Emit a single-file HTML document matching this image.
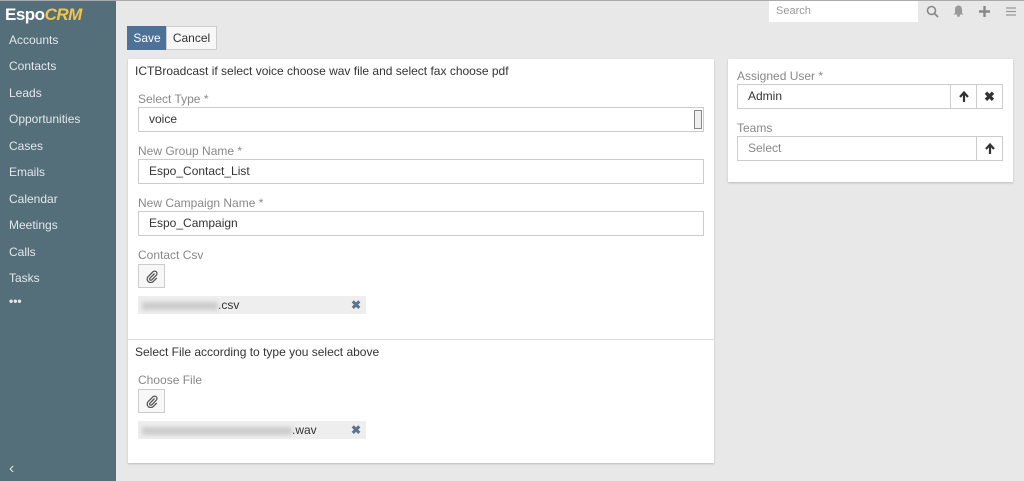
<!DOCTYPE html>
<html><head><meta charset="utf-8"><style>
*{box-sizing:border-box;margin:0;padding:0}
body{width:1024px;height:481px;overflow:hidden;background:#e8e8e8;font-family:"Liberation Sans",sans-serif;font-size:12px;color:#333;position:relative}
.top{position:absolute;left:0;top:0;width:1024px;height:1px;background:#aaa;z-index:5}
.sb{position:absolute;left:0;top:0;width:116px;height:481px;background:#546e7a}
.sb .nav{position:absolute;left:9px;color:#e3e8ec;font-size:12px}
.logo{position:absolute;left:5px;top:5px;font-size:17px;font-weight:bold;color:#fff;letter-spacing:-0.5px}
.logo span{color:#f4c44a;font-style:italic}
.abs{position:absolute}
.btn{position:absolute;height:24px;line-height:22px;font-size:12px;text-align:center;border:1px solid #ccc}
.panel{position:absolute;background:#fff;box-shadow:0 1px 2px rgba(0,0,0,.2)}
.lbl{position:absolute;color:#888;font-size:12px}
.inp{position:absolute;border:1px solid #ccc;height:25px;line-height:23px;padding-left:10px;font-size:12px;background:#fff}
.clip{position:absolute;width:27px;height:24px;border:1px solid #ccc;background:#f7f7f7}
.clip svg{position:absolute;left:7px;top:5px}
.file{position:absolute;height:18px;background:#eee;line-height:18px;font-size:12px}
.blur{display:inline-block;height:8px;background:#ccc;filter:blur(2px);vertical-align:middle}
.x{position:absolute;right:5px;top:0;color:#5a7390;font-weight:bold;font-size:12px}
.ib{position:absolute;width:27px;height:25px;border:1px solid #ccc;text-align:center;line-height:23px;font-weight:bold;font-size:13px;background:#fff}
.ib svg{position:absolute;left:8px;top:6px}
</style></head><body>
<div class="top"></div>
<div class="sb">
<div class="logo">Espo<span>CRM</span></div>
<div class="nav" style="top:33px">Accounts</div>
<div class="nav" style="top:59px">Contacts</div>
<div class="nav" style="top:86px">Leads</div>
<div class="nav" style="top:112px">Opportunities</div>
<div class="nav" style="top:139px">Cases</div>
<div class="nav" style="top:165px">Emails</div>
<div class="nav" style="top:192px">Calendar</div>
<div class="nav" style="top:218px">Meetings</div>
<div class="nav" style="top:245px">Calls</div>
<div class="nav" style="top:271px">Tasks</div>
<div class="nav" style="top:294px;font-weight:bold">•••</div>
<div class="nav" style="top:460px;font-size:16px;color:#ddd">‹</div>
</div>
<div class="abs" style="left:769px;top:1px;width:149px;height:21px;background:#fff;color:#999;font-size:11px;line-height:21px;padding-left:7px">Search</div>
<svg class="abs" style="left:926px;top:5px" width="13" height="13"><circle cx="5.5" cy="5.5" r="4" stroke="#888" stroke-width="1.6" fill="none"/><line x1="8.5" y1="8.5" x2="12" y2="12" stroke="#888" stroke-width="1.8"/></svg>
<svg class="abs" style="left:953px;top:5px" width="11" height="12"><path d="M5.5 0.5C3 0.5 2 2.5 2 5v3L0.5 9.5h10L9 8V5C9 2.5 8 0.5 5.5 0.5z" fill="#999"/><circle cx="5.5" cy="10.5" r="1.4" fill="#999"/></svg>
<svg class="abs" style="left:979px;top:6px" width="11" height="11"><path d="M5.5 0v11M0 5.5h11" stroke="#888" stroke-width="2.4"/></svg>
<svg class="abs" style="left:1006px;top:7px" width="10" height="9"><path d="M0 1h10M0 4.5h10M0 8h10" stroke="#999" stroke-width="1.3"/></svg>
<div class="btn" style="left:127px;top:26px;width:40px;background:#4e7199;border-color:#4e7199;color:#fff">Save</div>
<div class="btn" style="left:166px;top:26px;width:51px;background:#f7f7f7;color:#333">Cancel</div>
<div class="panel" style="left:128px;top:59px;width:586px;height:404px">
<div class="abs" style="left:7px;top:5px;font-size:12px">ICTBroadcast if select voice choose wav file and select fax choose pdf</div>
<div class="lbl" style="left:10px;top:33px">Select Type *</div>
<div class="inp" style="left:10px;top:48px;width:566px">voice<span style="position:absolute;right:1px;top:2px;width:8px;height:19px;border:1px solid #888;background:#eee"></span></div>
<div class="lbl" style="left:10px;top:85px">New Group Name *</div>
<div class="inp" style="left:10px;top:100px;width:566px">Espo_Contact_List</div>
<div class="lbl" style="left:10px;top:137px">New Campaign Name *</div>
<div class="inp" style="left:10px;top:152px;width:566px">Espo_Campaign</div>
<div class="lbl" style="left:10px;top:189px">Contact Csv</div>
<div class="clip" style="left:10px;top:205px"><svg width="12" height="13" viewBox="0 0 12 13"><path d="M8.5 3.5L4 8.2a1.2 1.2 0 0 0 1.7 1.7L10.3 5.2a2.4 2.4 0 0 0-3.4-3.4L2.2 6.6a3.5 3.5 0 0 0 5 5L10.7 8" stroke="#555" stroke-width="1.3" fill="none"/></svg></div>
<div class="file" style="left:10px;top:237px;width:228px;padding-left:4px"><span class="blur" style="width:76px"></span>.csv<span class="x">✖</span></div>
<div class="abs" style="left:0;top:280px;width:586px;border-top:1px solid #ddd"></div>
<div class="abs" style="left:7px;top:286px">Select File according to type you select above</div>
<div class="lbl" style="left:10px;top:314px">Choose File</div>
<div class="clip" style="left:10px;top:330px"><svg width="12" height="13" viewBox="0 0 12 13"><path d="M8.5 3.5L4 8.2a1.2 1.2 0 0 0 1.7 1.7L10.3 5.2a2.4 2.4 0 0 0-3.4-3.4L2.2 6.6a3.5 3.5 0 0 0 5 5L10.7 8" stroke="#555" stroke-width="1.3" fill="none"/></svg></div>
<div class="file" style="left:10px;top:362px;width:228px;padding-left:4px"><span class="blur" style="width:150px"></span>.wav<span class="x">✖</span></div>
</div>
<div class="panel" style="left:728px;top:59px;width:285px;height:123px">
<div class="lbl" style="left:9px;top:10px">Assigned User *</div>
<div class="inp" style="left:9px;top:25px;width:214px">Admin</div>
<div class="ib" style="left:222px;top:25px"><svg width="10" height="11"><path d="M5 11V2M1 6l4-4.5L9 6" stroke="#333" stroke-width="2.2" fill="none"/></svg></div>
<div class="ib" style="left:248px;top:25px">✖</div>
<div class="lbl" style="left:9px;top:62px">Teams</div>
<div class="inp" style="left:9px;top:77px;width:240px;color:#888">Select</div>
<div class="ib" style="left:248px;top:77px"><svg width="10" height="11"><path d="M5 11V2M1 6l4-4.5L9 6" stroke="#333" stroke-width="2.2" fill="none"/></svg></div>
</div>
</body></html>
